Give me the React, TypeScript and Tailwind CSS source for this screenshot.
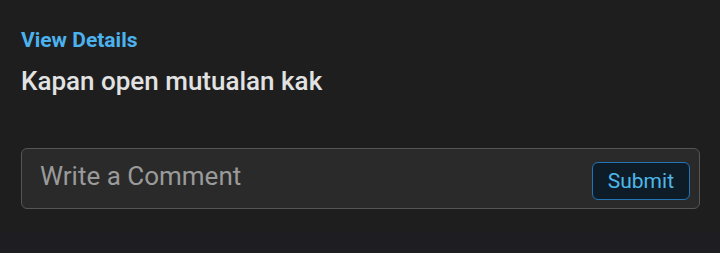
import React, { useState } from 'react';

const App: React.FC = () => {
  const [comment, setComment] = useState('');

  return (
    <div className="min-h-[253px] w-[720px] bg-[#1e1e1f] font-['Roboto',sans-serif]">
      <div className="pl-[21px] pr-[20px] pt-[28px] pb-[23px]">
        <a href="#" className="block text-[21px] leading-[24px] font-bold text-[#4cb2ee]">
          View Details
        </a>
        <p className="mt-[13px] text-[26px] leading-[32px] font-medium text-[#e2e2e2]">
          Kapan open mutualan kak
        </p>
        <div className="mt-[51px] flex h-[61px] items-start rounded-[6px] border border-[#555555] bg-[#2a2a2a] pl-[18px] pr-[9px]">
          <input
            value={comment}
            onChange={(e) => setComment(e.target.value)}
            placeholder="Write a Comment"
            className="mt-[11px] min-w-0 flex-1 bg-transparent text-[26px] leading-[32px] text-[#e2e2e2] placeholder:text-[#9a9a9a] outline-none"
          />
          <button className="mt-[13px] h-[38px] rounded-[6px] border border-[#2274b4] bg-[#0e1c28] px-[15px] text-[21px] leading-[24px] text-[#4db8e8]">
            Submit
          </button>
        </div>
      </div>
      <div className="h-[21px] bg-[#1e1d22]" />
    </div>
  );
};

export default App;
